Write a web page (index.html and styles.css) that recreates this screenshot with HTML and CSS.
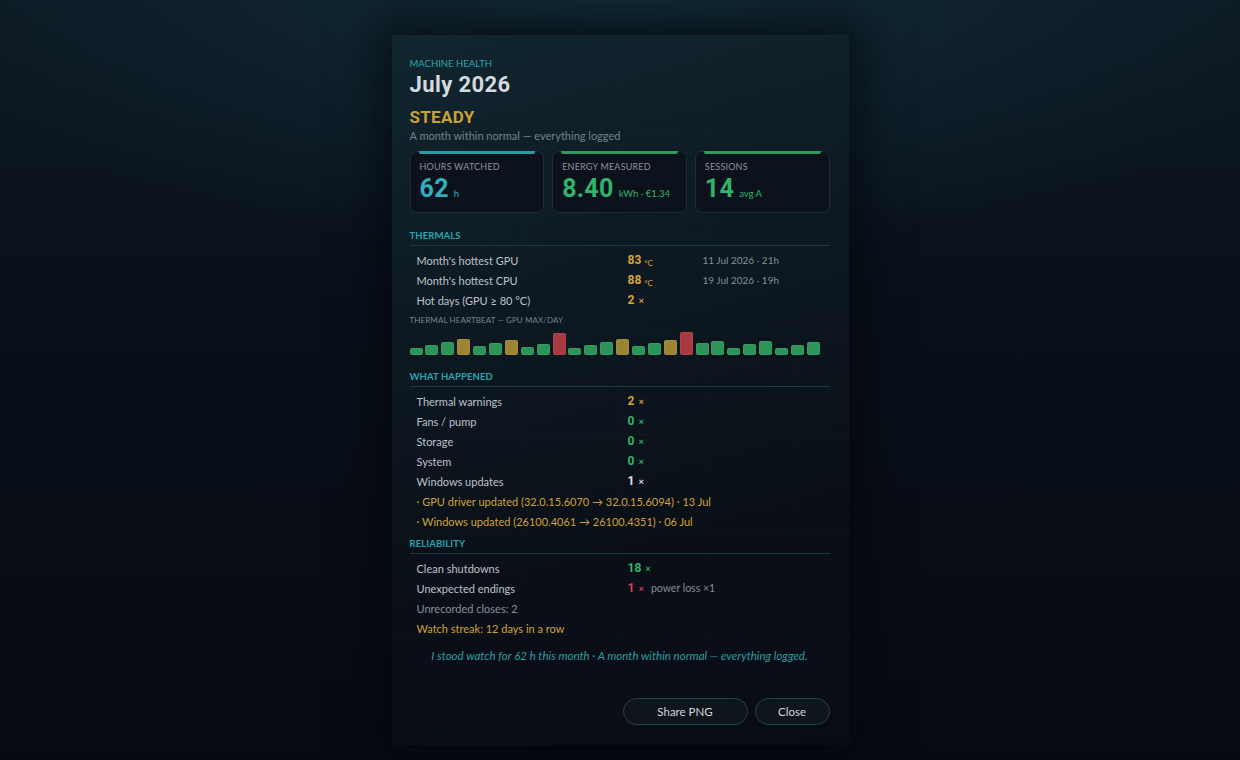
FILE: index.html
```html
<!DOCTYPE html>
<html lang="en">
<head>
<meta charset="utf-8">
<title>Machine Health — July 2026</title>
<link rel="stylesheet" href="styles.css">
</head>
<body>
<main class="panel">
  <div class="eyebrow">MACHINE HEALTH</div>
  <h1 class="title">July 2026</h1>
  <div class="verdict">STEADY</div>
  <div class="subtitle">A month within normal — everything logged</div>

  <div class="cards">
    <div class="card card-teal">
      <div class="card-label">HOURS WATCHED</div>
      <div class="card-value"><span class="num teal">62</span><span class="unit teal">h</span></div>
    </div>
    <div class="card card-green">
      <div class="card-label">ENERGY MEASURED</div>
      <div class="card-value"><span class="num green">8.40</span><span class="unit green">kWh · €1.34</span></div>
    </div>
    <div class="card card-green">
      <div class="card-label">SESSIONS</div>
      <div class="card-value"><span class="num green">14</span><span class="unit green">avg A</span></div>
    </div>
  </div>

  <section class="section section-thermals">
    <h2 class="section-head">THERMALS</h2>
    <div class="rows">
      <div class="row"><span class="label">Month's hottest GPU</span><span class="val yellow">83<small class="deg">°C</small></span><span class="meta">11 Jul 2026 · 21h</span></div>
      <div class="row"><span class="label">Month's hottest CPU</span><span class="val yellow">88<small class="deg">°C</small></span><span class="meta">19 Jul 2026 · 19h</span></div>
      <div class="row"><span class="label">Hot days (GPU ≥ 80 °C)</span><span class="val yellow">2<small class="x">×</small></span><span class="meta"></span></div>
    </div>
    <div class="beat-label">THERMAL HEARTBEAT — GPU MAX/DAY</div>
    <div class="beats">
      <span class="bar ok" style="height:7px"></span>
      <span class="bar ok" style="height:10px"></span>
      <span class="bar ok" style="height:13px"></span>
      <span class="bar warm" style="height:16px"></span>
      <span class="bar ok" style="height:9px"></span>
      <span class="bar ok" style="height:12px"></span>
      <span class="bar warm" style="height:15px"></span>
      <span class="bar ok" style="height:8px"></span>
      <span class="bar ok" style="height:11px"></span>
      <span class="bar hot" style="height:22px"></span>
      <span class="bar ok" style="height:7px"></span>
      <span class="bar ok" style="height:10px"></span>
      <span class="bar ok" style="height:13px"></span>
      <span class="bar warm" style="height:16px"></span>
      <span class="bar ok" style="height:9px"></span>
      <span class="bar ok" style="height:12px"></span>
      <span class="bar warm" style="height:15px"></span>
      <span class="bar hot" style="height:23px"></span>
      <span class="bar ok" style="height:12px"></span>
      <span class="bar ok" style="height:14px"></span>
      <span class="bar ok" style="height:7px"></span>
      <span class="bar ok" style="height:11px"></span>
      <span class="bar ok" style="height:14px"></span>
      <span class="bar ok" style="height:7px"></span>
      <span class="bar ok" style="height:10px"></span>
      <span class="bar ok" style="height:13px"></span>
    </div>
  </section>

  <section class="section section-events">
    <h2 class="section-head">WHAT HAPPENED</h2>
    <div class="rows">
      <div class="row"><span class="label">Thermal warnings</span><span class="val yellow">2<small class="x">×</small></span><span class="meta"></span></div>
      <div class="row"><span class="label">Fans / pump</span><span class="val green">0<small class="x">×</small></span><span class="meta"></span></div>
      <div class="row"><span class="label">Storage</span><span class="val green">0<small class="x">×</small></span><span class="meta"></span></div>
      <div class="row"><span class="label">System</span><span class="val green">0<small class="x">×</small></span><span class="meta"></span></div>
      <div class="row"><span class="label">Windows updates</span><span class="val white">1<small class="x">×</small></span><span class="meta"></span></div>
      <div class="line yellow-text">· GPU driver updated (32.0.15.6070 → 32.0.15.6094) · 13 Jul</div>
      <div class="line yellow-text">· Windows updated (26100.4061 → 26100.4351) · 06 Jul</div>
    </div>
  </section>

  <section class="section section-reliability">
    <h2 class="section-head">RELIABILITY</h2>
    <div class="rows">
      <div class="row"><span class="label">Clean shutdowns</span><span class="val green">18<small class="x">×</small></span><span class="meta"></span></div>
      <div class="row"><span class="label">Unexpected endings</span><span class="val red wide">1<small class="x">×</small><span class="note">power loss ×1</span></span></div>
      <div class="line muted-text">Unrecorded closes: 2</div>
      <div class="line yellow-text">Watch streak: 12 days in a row</div>
    </div>
  </section>

  <p class="quote">I stood watch for 62 h this month · A month within normal — everything logged.</p>

  <div class="actions">
    <button class="btn btn-share" type="button">Share PNG</button>
    <button class="btn btn-close" type="button">Close</button>
  </div>
</main>
</body>
</html>
```

FILE: styles.css
```css
* { box-sizing: border-box; }

html, body {
  margin: 0;
  padding: 0;
}

body {
  width: 1240px;
  height: 760px;
  overflow: hidden;
  font-family: "Lato", "Noto Sans", "Liberation Sans", sans-serif;
  color: #b9c0c7;
  background:
    radial-gradient(ellipse 700px 260px at 50% 0%, rgba(22, 58, 72, 0.5), rgba(22, 58, 72, 0) 100%),
    linear-gradient(180deg, #0d1a24 0%, #09101a 40%, #070a12 100%);
}

.panel {
  width: 457px;
  margin: 35px auto 0;
  padding: 23px 19px 20px 18px;
  background:
    linear-gradient(rgba(40, 150, 160, 0.045) 1px, transparent 1px) 0 99px / 100% 100px,
    linear-gradient(90deg, rgba(40, 150, 160, 0.02) 1px, transparent 1px) 45px 0 / 90px 100%,
    linear-gradient(165deg, #11262f 0%, #0d1922 35%, #0a0f17 70%, #090c14 100%);
  box-shadow: 0 0 40px 12px rgba(3, 6, 10, 0.65);
}

.eyebrow {
  font-size: 9.5px;
  line-height: 12px;
  color: #2aa5ae;
}

.title {
  margin: 2px 0 0;
  font-family: "Roboto", "Liberation Sans", sans-serif;
  font-weight: 700;
  font-size: 22px;
  line-height: 26px;
  color: #d5dade;
  letter-spacing: 0.4px;
}

.verdict {
  margin-top: 8px;
  font-family: "Roboto", "Liberation Sans", sans-serif;
  font-weight: 700;
  font-size: 17px;
  line-height: 22px;
  color: #c9a233;
  letter-spacing: 0.3px;
}

.subtitle {
  margin-top: 1px;
  font-size: 11px;
  line-height: 14px;
  color: #76808a;
}

.cards {
  margin-top: 8px;
  display: grid;
  grid-template-columns: repeat(3, 1fr);
  gap: 8px;
}

.card {
  position: relative;
  height: 62px;
  padding: 9px 9px 0;
  border: 1px solid #1b2d35;
  border-radius: 7px;
  background: #0b121b;
}

.card::before {
  content: "";
  position: absolute;
  top: -1px;
  left: 8px;
  right: 8px;
  height: 3px;
  border-radius: 0 0 2px 2px;
}

.card-teal::before { background: #2a9aa6; }
.card-green::before { background: #2f9a5c; }

.card-label {
  font-size: 9px;
  line-height: 11px;
  color: #8a939c;
  letter-spacing: 0.2px;
}

.card-value {
  margin-top: 4px;
  display: flex;
  align-items: baseline;
  gap: 5px;
}

.num {
  font-family: "Roboto", "Liberation Sans", sans-serif;
  font-weight: 700;
  font-size: 25px;
  line-height: 26px;
  letter-spacing: 0.3px;
}

.unit {
  font-size: 9.5px;
  font-weight: 400;
}

.teal { color: #2fb0bc; }
.green { color: #33b26b; }
.yellow { color: #d2a73a; }
.red { color: #d6454c; }
.white { color: #dfe3e7; }

.section-thermals { margin-top: 17px; }
.section-events { margin-top: 16px; }
.section-reliability { margin-top: 7px; }

.section-head {
  margin: 0;
  padding-bottom: 3px;
  border-bottom: 1px solid #1d3a42;
  font-size: 9.5px;
  line-height: 12px;
  font-weight: 700;
  color: #2aa5ae;
  letter-spacing: 0.1px;
}

.rows {
  margin-top: 4px;
  padding-left: 7px;
}

.row {
  display: grid;
  grid-template-columns: 211px 75px 1fr;
  height: 20px;
  align-items: center;
  font-size: 11px;
}

.label {
  color: #bcc3ca;
}

.val {
  font-family: "Roboto", "Liberation Sans", sans-serif;
  font-weight: 700;
  font-size: 12px;
  white-space: nowrap;
}

.val.wide { grid-column: 2 / 4; }

.val small {
  font-family: "Lato", "Noto Sans", sans-serif;
  font-weight: 700;
}

.deg {
  font-size: 8px;
  margin-left: 3px;
  position: relative;
  top: 2px;
  font-weight: 400 !important;
}

.x {
  font-size: 9.5px;
  margin-left: 4px;
}

.note {
  margin-left: 7px;
  font-family: "Lato", "Noto Sans", sans-serif;
  font-weight: 400;
  font-size: 10.5px;
  color: #838c95;
}

.meta {
  font-size: 10px;
  color: #868e97;
}

.line {
  height: 20px;
  line-height: 21px;
  font-size: 11px;
}

.yellow-text { color: #cfa23a; }
.muted-text { color: #87909a; }

.beat-label {
  margin-top: 5px;
  font-size: 8px;
  line-height: 10px;
  color: #78818a;
  letter-spacing: 0.1px;
}

.beats {
  margin-top: 6px;
  height: 24px;
  display: flex;
  align-items: flex-end;
  gap: 2.9px;
}

.bar {
  width: 13px;
  border-radius: 2px;
  border: 1px solid rgba(255, 255, 255, 0.06);
}

.bar.ok { background: #2d9459; }
.bar.warm { background: #9c8433; }
.bar.hot { background: #a63a40; }

.quote {
  margin: 11px 0 0;
  text-align: center;
  font-style: italic;
  font-size: 11.5px;
  line-height: 14px;
  color: #2b9da5;
}

.actions {
  margin-top: 35px;
  display: flex;
  justify-content: flex-end;
  gap: 7px;
}

.btn {
  height: 27px;
  border-radius: 14px;
  border: 1px solid #1f454b;
  background: #0d151d;
  color: #d2d7dc;
  font-family: "Lato", "Noto Sans", sans-serif;
  font-size: 11.5px;
  cursor: pointer;
}

.btn-share { width: 125px; }
.btn-close { width: 75px; }
```
